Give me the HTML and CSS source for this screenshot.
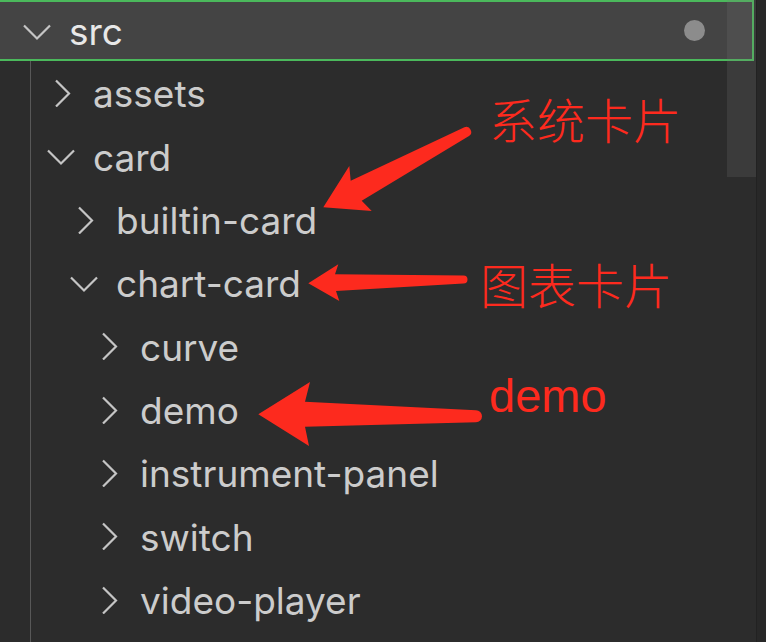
FILE: index.html
```html
<!DOCTYPE html>
<html lang="zh">
<head>
<meta charset="utf-8">
<title>Explorer</title>
<link rel="stylesheet" href="styles.css">
</head>
<body>
<div class="explorer">
  <div class="tree">
    <div class="row selected">
      <svg class="twistie" viewBox="0 0 28 28"><polyline points="1,8.5 14,21.5 27,8.5"/></svg>
      <span class="label">src</span>
      <span class="dot"></span>
    </div>
    <div class="children">
      <div class="row l1">
        <svg class="twistie" viewBox="0 0 28 28"><polyline points="9,1.5 22,14.5 9,27.5"/></svg>
        <span class="label">assets</span>
      </div>
      <div class="row l1">
        <svg class="twistie" viewBox="0 0 28 28"><polyline points="1,8.5 14,21.5 27,8.5"/></svg>
        <span class="label">card</span>
      </div>
      <div class="row l2">
        <svg class="twistie" viewBox="0 0 28 28"><polyline points="9,1.5 22,14.5 9,27.5"/></svg>
        <span class="label">builtin-card</span>
      </div>
      <div class="row l2">
        <svg class="twistie" viewBox="0 0 28 28"><polyline points="1,8.5 14,21.5 27,8.5"/></svg>
        <span class="label">chart-card</span>
      </div>
      <div class="row l3">
        <svg class="twistie" viewBox="0 0 28 28"><polyline points="9,1.5 22,14.5 9,27.5"/></svg>
        <span class="label">curve</span>
      </div>
      <div class="row l3">
        <svg class="twistie" viewBox="0 0 28 28"><polyline points="9,1.5 22,14.5 9,27.5"/></svg>
        <span class="label">demo</span>
      </div>
      <div class="row l3">
        <svg class="twistie" viewBox="0 0 28 28"><polyline points="9,1.5 22,14.5 9,27.5"/></svg>
        <span class="label">instrument-panel</span>
      </div>
      <div class="row l3">
        <svg class="twistie" viewBox="0 0 28 28"><polyline points="9,1.5 22,14.5 9,27.5"/></svg>
        <span class="label">switch</span>
      </div>
      <div class="row l3">
        <svg class="twistie" viewBox="0 0 28 28"><polyline points="9,1.5 22,14.5 9,27.5"/></svg>
        <span class="label">video-player</span>
      </div>
    </div>
    <div class="scrollbar"></div>
  </div>
  <div class="edge"></div>

  <svg class="arrows" viewBox="0 0 766 642">
    <path d="M 464.4,127.3 L 350.7,180.7 L 349.3,166 L 323.3,207.3 L 371.7,211 L 361.7,200.7 L 469.0,136.1 A 5 5 0 0 0 464.4,127.3 Z"/>
    <path d="M 463.5,275.5 L 335,274.3 L 338.3,264.3 L 308.3,283.3 L 339.3,301 L 336,291 L 463.5,283.5 A 4 4 0 0 0 463.5,275.5 Z"/>
    <path d="M 476,410.2 L 305,401.7 L 310,382 L 258.3,414.3 L 309,446 L 305,426.7 L 476,422.2 A 6 6 0 0 0 476,410.2 Z"/>
  </svg>
  <div class="note note-system">系统卡片</div>
  <div class="note note-chart">图表卡片</div>
  <div class="note note-demo">demo</div>
</div>
</body>
</html>
```

FILE: styles.css
```css
body {
  margin: 0;
  background: #2c2c2c;
  font-family: "Inter", "Noto Sans", sans-serif;
}

.explorer {
  position: relative;
  display: flex;
  width: 766px;
  height: 642px;
  overflow: hidden;
  background: #2c2c2c;
}

.tree {
  position: relative;
  flex: 1;
  display: flex;
  flex-direction: column;
}

.edge {
  width: 9px;
  background: #282828;
  border-left: 1px solid #222222;
}

.row {
  display: flex;
  align-items: center;
  height: 63.33px;
  box-sizing: border-box;
  padding-top: 2px;
  color: #cccccc;
  font-size: 37px;
  white-space: nowrap;
  flex: none;
}

.twistie {
  width: 28px;
  height: 28px;
  margin-right: 18px;
  margin-top: -2px;
  flex: none;
  fill: none;
  stroke: #c5c5c5;
  stroke-width: 2.2;
}

.selected {
  height: 61.33px;
  background: #444444;
  border: 2px solid #4bb95c;
  border-left: none;
  margin-right: 2px;
  padding-left: 23px;
  color: #e8e8e8;
}

.dot {
  margin-left: auto;
  margin-right: 47px;
  margin-top: -2px;
  width: 21px;
  height: 21px;
  border-radius: 50%;
  background: #8c8c8c;
}

.children {
  flex: 1;
  margin-left: 30px;
  border-left: 1px solid #585858;
}

.l1 { padding-left: 16px; }
.l2 { padding-left: 39px; }
.l3 { padding-left: 63px; }

.scrollbar {
  position: absolute;
  top: 0;
  right: 0;
  width: 29px;
  height: 177px;
  background: rgba(121, 121, 121, 0.2);
}

.arrows {
  position: absolute;
  left: 0;
  top: 0;
  width: 766px;
  height: 642px;
  fill: #fd2a1e;
  pointer-events: none;
}

.note {
  position: absolute;
  color: #fd2a1e;
  white-space: nowrap;
}

.note-system,
.note-chart {
  font-family: "Noto Sans CJK SC", sans-serif;
  font-size: 48px;
  line-height: 48px;
  font-weight: 300;
}

.note-system { left: 489px; top: 94px; }
.note-chart { left: 480px; top: 259px; }

.note-demo {
  left: 489px;
  top: 372px;
  font-family: "Liberation Sans", Arial, sans-serif;
  font-size: 47px;
  line-height: 47px;
}
```
